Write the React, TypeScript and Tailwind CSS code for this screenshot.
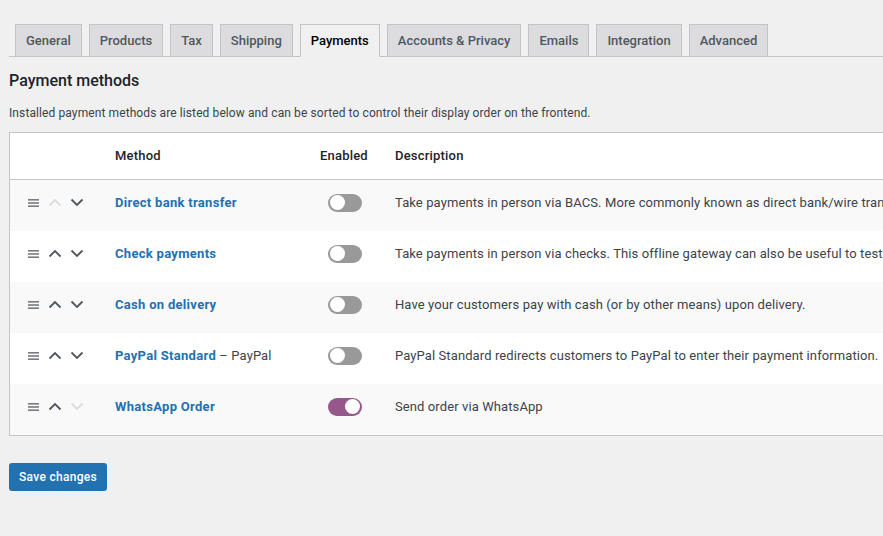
import React from "react";

type Method = {
  title: string;
  suffix?: string;
  enabled: boolean;
  description: string;
  upDisabled?: boolean;
  downDisabled?: boolean;
};

const tabs = [
  "General",
  "Products",
  "Tax",
  "Shipping",
  "Payments",
  "Accounts & Privacy",
  "Emails",
  "Integration",
  "Advanced",
];

const methods: Method[] = [
  {
    title: "Direct bank transfer",
    enabled: false,
    description:
      "Take payments in person via BACS. More commonly known as direct bank/wire transfer.",
    upDisabled: true,
  },
  {
    title: "Check payments",
    enabled: false,
    description:
      "Take payments in person via checks. This offline gateway can also be useful to test purchases.",
  },
  {
    title: "Cash on delivery",
    enabled: false,
    description: "Have your customers pay with cash (or by other means) upon delivery.",
  },
  {
    title: "PayPal Standard",
    suffix: "PayPal",
    enabled: false,
    description:
      "PayPal Standard redirects customers to PayPal to enter their payment information.",
  },
  {
    title: "WhatsApp Order",
    enabled: true,
    description: "Send order via WhatsApp",
    downDisabled: true,
  },
];

function DragHandle() {
  return (
    <svg width="12" height="10" viewBox="0 0 12 10" className="text-[#787c82]">
      <rect x="0" y="1" width="11" height="1.6" fill="currentColor" />
      <rect x="0" y="4.2" width="11" height="1.6" fill="currentColor" />
      <rect x="0" y="7.4" width="11" height="1.6" fill="currentColor" />
    </svg>
  );
}

function Chevron({ up, disabled }: { up?: boolean; disabled?: boolean }) {
  return (
    <svg
      width="14"
      height="9"
      viewBox="0 0 14 9"
      className={disabled ? "text-[#dcdcde]" : "text-[#50575e]"}
    >
      <path
        d={up ? "M1.5 7.5 L7 2 L12.5 7.5" : "M1.5 1.5 L7 7 L12.5 1.5"}
        fill="none"
        stroke="currentColor"
        strokeWidth="1.8"
      />
    </svg>
  );
}

function Toggle({ on }: { on: boolean }) {
  return (
    <div
      className={`w-[34px] h-[18px] rounded-full flex items-center px-[2px] ${
        on ? "bg-[#96588a] justify-end" : "bg-[#999999] justify-start"
      }`}
    >
      <div className="w-[15px] h-[15px] rounded-full bg-white" />
    </div>
  );
}

export default function App() {
  return (
    <div
      className="w-[883px] h-[536px] overflow-hidden bg-[#f0f0f1] text-[#1d2327] text-[13px]"
      style={{ fontFamily: "Roboto, 'Noto Sans', Arial, sans-serif" }}
    >
      <div className="pl-[9px] pt-[24px]">
        {/* settings tabs */}
        <nav className="flex gap-[7px] pl-[6px] border-b border-[#c3c4c7] h-[33px]">
          {tabs.map((t) => {
            const active = t === "Payments";
            return (
              <div
                key={t}
                className={`h-[33px] px-[10px] flex items-center border border-[#c3c4c7] text-[13px] font-medium leading-none ${
                  active
                    ? "bg-[#f0f0f1] text-[#000] border-b-[#f0f0f1]"
                    : "bg-[#dcdcde] text-[#50575e]"
                }`}
              >
                {t}
              </div>
            );
          })}
        </nav>

        <h2 className="mt-[14px] text-[16px] font-medium leading-[20px] text-[#1d2327]">
          Payment methods
        </h2>
        <p className="mt-[14px] text-[12px] leading-[16px] text-[#3c434a] tracking-[0.1px]">
          Installed payment methods are listed below and can be sorted to control their
          display order on the frontend.
        </p>

        {/* gateway table */}
        <div className="mt-[11px] w-[1000px] border border-[#c3c4c7] bg-white">
          <div className="flex items-center h-[47px] border-b border-[#c3c4c7] font-medium text-[#1d2327] tracking-[0.2px]">
            <div className="w-[105px]" />
            <div className="w-[205px]">Method</div>
            <div className="w-[75px]">Enabled</div>
            <div>Description</div>
          </div>
          {methods.map((m, i) => (
            <div
              key={m.title}
              className={`flex items-center h-[51px] pb-[6px] ${i % 2 === 0 ? "bg-[#f9f9f9]" : "bg-white"}`}
            >
              <div className="w-[105px] flex items-center pl-[18px] gap-[8px]">
                <DragHandle />
                <Chevron up disabled={m.upDisabled} />
                <Chevron disabled={m.downDisabled} />
              </div>
              <div className="w-[205px] flex items-center">
                <span className="text-[#2271b1] font-bold tracking-[0.3px]">{m.title}</span>
                {m.suffix && (
                  <span className="text-[#3c434a] tracking-[0.1px]">&nbsp;– {m.suffix}</span>
                )}
              </div>
              <div className="w-[75px] pl-[8px]">
                <Toggle on={m.enabled} />
              </div>
              <div className="whitespace-nowrap text-[#3c434a] tracking-[0.1px]">
                {m.description}
              </div>
            </div>
          ))}
        </div>

        <button className="mt-[27px] h-[28px] px-[10px] rounded-[3px] bg-[#2271b1] text-white text-[12px] font-medium tracking-[0.3px]">
          Save changes
        </button>
      </div>
    </div>
  );
}
